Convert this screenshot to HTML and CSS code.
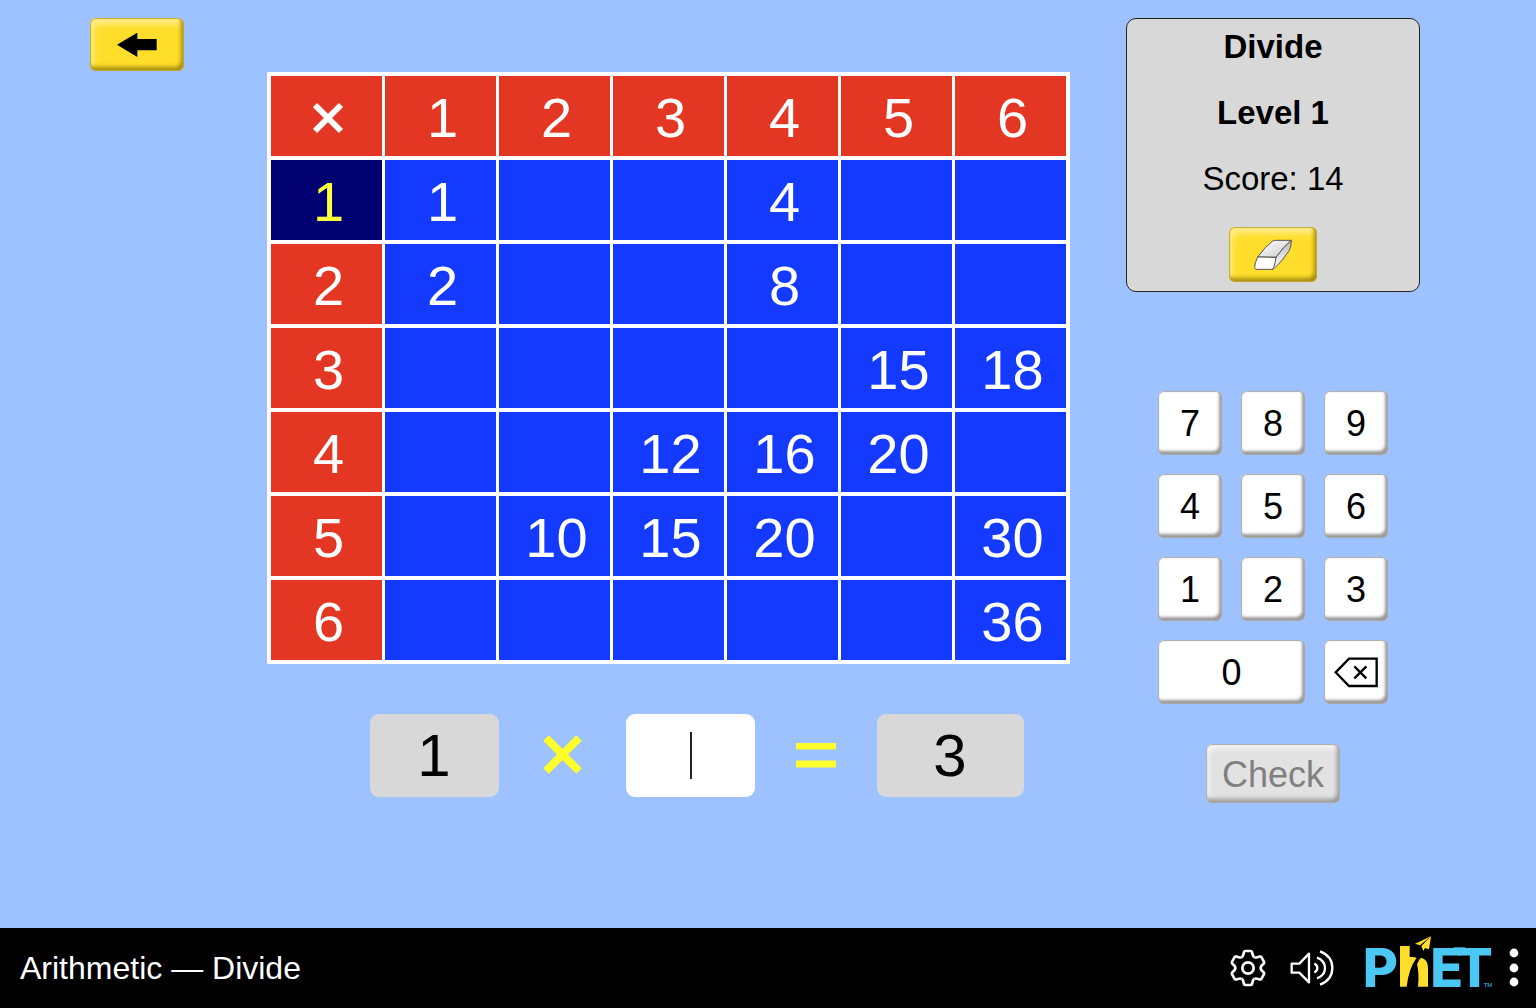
FILE: index.html
```
<!DOCTYPE html>
<html lang="en">
<head>
<meta charset="utf-8">
<meta name="viewport" content="width=device-width, initial-scale=1">
<title>Arithmetic — Divide</title>
<link rel="stylesheet" href="styles.css">
</head>
<body>
<main class="stage">
  <button class="btn btn-yellow back" type="button" aria-label="Back">
    <svg width="40" height="24" viewBox="111 69 120 72" aria-hidden="true"><path d="M111 104 172 68V87H230V121H172V141Z"/></svg>
  </button>

  <section class="board">
    <table class="times-table">
      <thead>
        <tr>
          <th scope="col" aria-label="times"><svg width="32" height="32" viewBox="0 0 32 32" aria-hidden="true"><path d="M2 3 28 29M28 3 2 29" stroke="#fff" stroke-width="6"/></svg></th>
          <th scope="col">1</th><th scope="col">2</th><th scope="col">3</th><th scope="col">4</th><th scope="col">5</th><th scope="col">6</th>
        </tr>
      </thead>
      <tbody>
        <tr><th scope="row" class="active">1</th><td>1</td><td></td><td></td><td>4</td><td></td><td></td></tr>
        <tr><th scope="row">2</th><td>2</td><td></td><td></td><td>8</td><td></td><td></td></tr>
        <tr><th scope="row">3</th><td></td><td></td><td></td><td></td><td>15</td><td>18</td></tr>
        <tr><th scope="row">4</th><td></td><td></td><td>12</td><td>16</td><td>20</td><td></td></tr>
        <tr><th scope="row">5</th><td></td><td>10</td><td>15</td><td>20</td><td></td><td>30</td></tr>
        <tr><th scope="row">6</th><td></td><td></td><td></td><td></td><td></td><td>36</td></tr>
      </tbody>
    </table>

    <form class="equation">
      <output class="term">1</output>
      <svg width="45" height="45" viewBox="0 0 45 45" role="img" aria-label="times"><path d="M6 5 39 38M39 5 6 38" stroke="#ffff2b" stroke-width="8"/></svg>
      <div class="entry">
        <input class="term" type="text" inputmode="numeric" aria-label="Missing factor">
        <span class="caret"></span>
      </div>
      <svg width="40" height="26" viewBox="0 0 40 26" role="img" aria-label="equals"><path d="M0 3H40M0 21H40" stroke="#ffff2b" stroke-width="7"/></svg>
      <output class="term term-wide">3</output>
    </form>
  </section>

  <aside class="side">
    <div class="status">
      <h1>Divide</h1>
      <h2>Level 1</h2>
      <p>Score: 14</p>
      <button class="btn btn-yellow erase" type="button" aria-label="Erase">
        <svg width="38" height="32" viewBox="116 69 114 96" aria-hidden="true">
          <defs>
            <linearGradient id="top" x1="0" y1="0" x2="1" y2="1"><stop offset="0" stop-color="#fff"/><stop offset="1" stop-color="#ccc"/></linearGradient>
            <linearGradient id="edge" x1="0" y1="0" x2="0" y2="1"><stop offset="0" stop-color="#bbb"/><stop offset="1" stop-color="#fff"/></linearGradient>
          </defs>
          <g stroke="#555" stroke-width="3" stroke-linejoin="round">
            <path fill="url(#top)" d="M127 123Q150 91 171 76Q175 73 180 73H228Q203 94 182 124Z"/>
            <path fill="url(#edge)" d="M228 73Q228 91 222 103Q203 133 176 158Q174 160 170 160Q178 145 182 124Q203 94 228 73Z"/>
            <path fill="#fff" d="M127 123Q118 140 118 155Q119 160 125 160H170Q177 160 182 124Z"/>
          </g>
        </svg>
      </button>
    </div>

    <div class="keypad">
      <button class="btn key" type="button">7</button>
      <button class="btn key" type="button">8</button>
      <button class="btn key" type="button">9</button>
      <button class="btn key" type="button">4</button>
      <button class="btn key" type="button">5</button>
      <button class="btn key" type="button">6</button>
      <button class="btn key" type="button">1</button>
      <button class="btn key" type="button">2</button>
      <button class="btn key" type="button">3</button>
      <button class="btn key key-zero" type="button">0</button>
      <button class="btn key" type="button" aria-label="Backspace">
        <svg width="44" height="32" viewBox="70 79 132 96" fill="none" stroke="#000" stroke-width="7" aria-hidden="true"><path d="M75 125 115 84H198V166H115Z"/><path d="M131 107 167 143M167 107 131 143"/></svg>
      </button>
    </div>

    <button class="btn check" type="button" disabled>Check</button>
  </aside>
</main>

<footer class="navbar">
  <span class="title">Arithmetic — Divide</span>
  <button class="icon" type="button" aria-label="Settings">
    <svg width="38" height="38" viewBox="27 27 114 114" fill="none" stroke="#fff" stroke-width="8" aria-hidden="true">
      <defs><path id="tooth" d="M65 51Q69 49 70 44L72 36Q73 33 76 33H92Q95 33 96 36L98 44Q99 49 103 51"/></defs>
      <use href="#tooth"/>
      <use href="#tooth" transform="rotate(60 84 84)"/>
      <use href="#tooth" transform="rotate(120 84 84)"/>
      <use href="#tooth" transform="rotate(180 84 84)"/>
      <use href="#tooth" transform="rotate(240 84 84)"/>
      <use href="#tooth" transform="rotate(300 84 84)"/>
      <circle cx="84" cy="84" r="17"/>
    </svg>
  </button>
  <button class="icon icon-sound" type="button" aria-label="Sound">
    <svg width="44" height="38" viewBox="210 27 132 114" fill="none" stroke="#fff" stroke-width="7" stroke-linejoin="round" aria-hidden="true"><path d="M215 71H238L267 41V127L238 98H215Z"/><path d="M283 71Q292 75 292 84Q292 93 283 97M291 53Q315 62 315 84Q315 106 291 115M300 34Q337 48 337 84Q337 120 300 134"/></svg>
  </button>
  <a class="icon icon-logo" href="#" aria-label="PhET">
    <svg width="128" height="72" viewBox="45 6 384 216" aria-hidden="true">
      <g class="wordmark">
        <text x="38" y="170">P</text>
        <text x="241" y="170">E</text>
        <text x="319" y="170">T</text>
      </g>
      <path fill="#4bc7f3" d="M310 52H345V73H310Z"/>
      <g fill="#ffde2b">
        <path d="M150 48H179V81H184Q190 80 200 83Q176 115 170 170H150Z"/>
        <path d="M213 83Q234 87 234 114V170H204Q208 130 201 103Q206 88 213 83Z"/>
        <path d="M243 19 195 41 210 46ZM243 19 214 48 220 63 225 54 237 58Z"/>
      </g>
      <text class="tm" x="401" y="170">TM</text>
    </svg>
  </a>
  <button class="icon icon-menu" type="button" aria-label="Menu">
    <svg width="10" height="40" viewBox="0 0 10 40" fill="#fff" aria-hidden="true"><circle cx="5" cy="5" r="4.4"/><circle cx="5" cy="20" r="4.4"/><circle cx="5" cy="34" r="4.4"/></svg>
  </button>
</footer>
</body>
</html>
```

FILE: styles.css
```
* {
  box-sizing: border-box;
}

body {
  margin: 0;
  min-height: 100vh;
  display: flex;
  flex-direction: column;
  background: #9ec1ff;
  color: #000;
  font-family: "Liberation Sans", Arial, sans-serif;
}

button,
input {
  font: inherit;
  color: inherit;
}

svg {
  display: block;
}

.stage {
  flex: 1;
  display: grid;
  grid-template-columns: 94px 1fr 294px;
  align-items: start;
  padding: 18px 116px 24px 90px;
}

/* Raised push buttons */
.btn {
  display: flex;
  align-items: center;
  justify-content: center;
  padding: 0;
  border: 0;
  border-radius: 6px;
  background: #fff;
  box-shadow: inset 0 0 1px 1px #a8a8a8, inset -3px -4px 3px #999;
}

.btn-yellow {
  background: #ffde2b;
  box-shadow: inset 0 0 1px 1px #c4aa35, inset -3px -4px 4px #a38b10, inset 3px 6px 6px #ffee91;
}

.back {
  height: 53px;
}

.erase {
  width: 88px;
  height: 55px;
}

/* Multiplication table */
.board {
  padding: 54px 56px 0 83px;
}

.times-table {
  width: 100%;
  table-layout: fixed;
  border-collapse: separate;
  border-spacing: 3px 4px;
  padding: 0 1px;
  background: #fff;
  color: #fff;
  font-size: 56px;
  line-height: 64px;
  text-align: center;
}

.times-table th,
.times-table td {
  height: 80px;
  padding: 4px 0 0 4px;
  font-weight: 400;
  background: #1439ff;
}

.times-table th {
  background: #e33623;
}

.times-table th.active {
  background: #000070;
  color: #ffff40;
}

.times-table svg {
  margin: 0 auto;
}

/* Equation */
.equation {
  display: flex;
  align-items: center;
  justify-content: center;
  gap: 41px;
  padding-left: 56px;
  margin-top: 50px;
}

.term {
  display: block;
  width: 129px;
  height: 83px;
  padding: 0;
  border: 0;
  border-radius: 9px;
  background: #d8d8d8;
  font-size: 60px;
  line-height: 83px;
  text-align: center;
}

.term-wide {
  width: 147px;
}

.entry {
  position: relative;
}

.entry .term {
  background: #fff;
}

.caret {
  position: absolute;
  top: 18px;
  left: 64px;
  width: 2px;
  height: 47px;
  background: #222;
}

/* Status panel */
.side {
  display: flex;
  flex-direction: column;
  align-items: center;
}

.status {
  width: 100%;
  display: flex;
  flex-direction: column;
  align-items: center;
  gap: 30px;
  padding: 10px 9px 9px;
  border: 1px solid #222;
  border-radius: 10px;
  background: #d8d8d8;
  font-size: 33px;
  line-height: 36px;
}

.status h1,
.status h2,
.status p {
  margin: 0;
  font-size: 33px;
}

/* Keypad */
.keypad {
  display: grid;
  grid-template-columns: repeat(3, 64px);
  grid-auto-rows: 64px;
  gap: 19px;
  margin-top: 99px;
}

.key,
.check {
  padding-top: 2px;
  font-size: 36px;
}

.key-zero {
  grid-column: span 2;
}

.check {
  width: 134px;
  height: 59px;
  margin-top: 40px;
  background: #e2e2e2;
  color: #808080;
  box-shadow: inset 0 0 1px 1px #aaa, inset -3px -4px 4px #999, inset 3px 5px 5px #f4f4f4;
}

/* Bottom bar */
.navbar {
  display: flex;
  align-items: center;
  height: 80px;
  padding: 0 17px 0 20px;
  background: #000;
  color: #fff;
}

.title {
  flex: 1;
  font-size: 32px;
}

.icon {
  padding: 0;
  border: 0;
  background: none;
}

.icon-sound {
  margin-left: 23px;
}

.icon-logo {
  margin: 0 16px 0 31px;
}

.icon-logo svg {
  overflow: visible;
}

.wordmark {
  fill: #4bc7f3;
  font-family: Inter, sans-serif;
  font-size: 162px;
  font-weight: 800;
}

.tm {
  fill: #4bc7f3;
  font-size: 18px;
}
```
